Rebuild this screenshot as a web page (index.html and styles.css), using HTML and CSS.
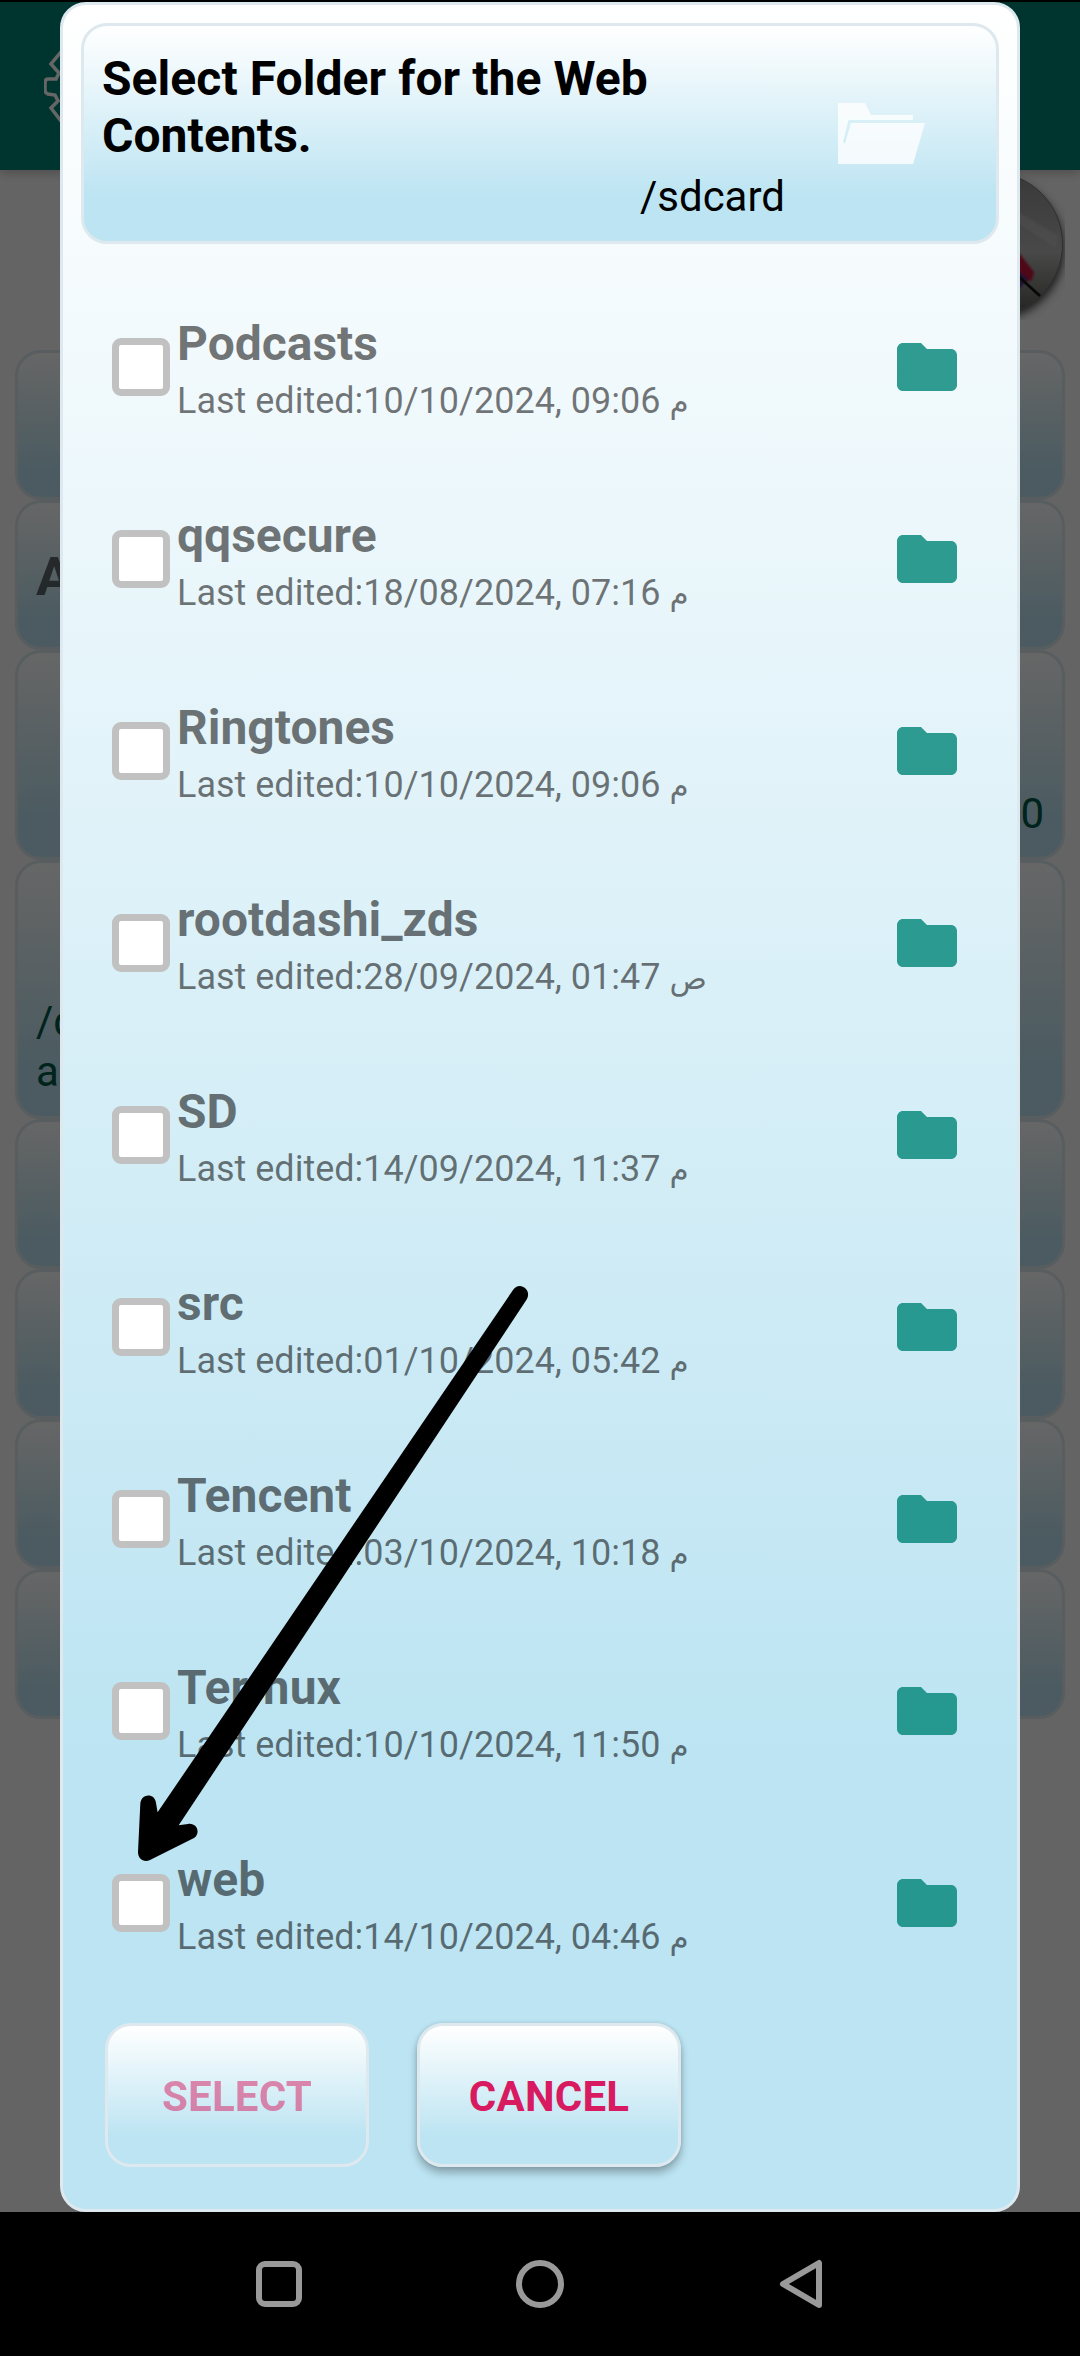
FILE: index.html
```html
<!DOCTYPE html>
<html lang="en">
<head>
<meta charset="utf-8">
<title>Select Folder</title>
<link rel="stylesheet" href="styles.css">
</head>
<body>
<svg class="defs" aria-hidden="true">
  <symbol id="folder" viewBox="0 0 24 24"><path d="M10 4H4c-1.100 0-2 .9-2 2v12c0 1.100.9 2 2 2h16c1.100 0 2-.9 2-2V8c0-1.100-.9-2-2-2h-8z"/></symbol>
</svg>
<div class="screen">
  <div class="app">
    <header class="toolbar">
      <svg class="gear" viewBox="0 0 84 84"><path d="M34 2h16l2 10 6 3 9-7 10 11-7 9 3 5 10 2v14l-10 3-3 6 7 8-10 11-9-7-6 3-2 10H34l-2-10-6-3-9 7L7 64l7-7-3-6-7-1q-3-1-3-4v-7q0-4 3-4h8l3-6-8-9L17 8l9 7 6-3z"/></svg>
    </header>
    <div class="banner">
      <svg class="avatar" viewBox="0 0 153 150">
        <defs>
          <linearGradient id="disc" x1="0" y1="0" x2="0" y2="1"><stop offset="0" stop-color="#8f8f8f"/><stop offset=".55" stop-color="#b4b6b4"/><stop offset=".8" stop-color="#83857e"/><stop offset="1" stop-color="#555"/></linearGradient>
          <filter id="soft" x="-20%" y="-20%" width="140%" height="140%"><feGaussianBlur stdDeviation="5"/></filter>
          <filter id="slight" x="-20%" y="-20%" width="140%" height="140%"><feGaussianBlur stdDeviation="1.200"/></filter>
        </defs>
        <circle cx="81" cy="79" r="71" fill="#444" filter="url(#soft)"/>
        <circle cx="79" cy="74" r="71.500" fill="url(#disc)" stroke="#777" stroke-width="1"/>
        <path d="M106 42l40 24-2 12-40-26z" fill="#d0d0d0" opacity=".4" filter="url(#slight)"/>
        <path d="M100 74l22 28-2 8-7 2-13-14z" fill="#c2143e" filter="url(#slight)"/>
        <path d="M100 96l16 13-8 9-8 4z" fill="#4b2f86" filter="url(#slight)"/>
        <path d="M106 106l22 20" stroke="#171717" stroke-width="3"/>
      </svg>
    </div>
    <main class="cards">
      <section class="card"></section>
      <section class="card card-title">A</section>
      <section class="card card-value">0</section>
      <section class="card card-path">/d<br>a</section>
      <section class="card"></section>
      <section class="card"></section>
      <section class="card"></section>
      <section class="card"></section>
    </main>
  </div>

  <div class="scrim">
    <div class="dialog" role="dialog">
      <header class="dialog-head">
        <div class="head-text">
          <h1>Select Folder for the Web Contents.</h1>
          <p>/sdcard</p>
        </div>
        <svg class="open-folder" viewBox="0 0 87 61"><path d="M0 0h27l6 12h42v5H10.500L5 39l2 1.500L13 20h74L75 61H0z"/></svg>
      </header>

      <ul class="list">
        <li class="row"><span class="check"></span><div class="info"><b>Podcasts</b><span>Last edited:10/10/2024, 09:06 <i>م</i></span></div><svg class="folder"><use href="#folder"/></svg></li>
        <li class="row"><span class="check"></span><div class="info"><b>qqsecure</b><span>Last edited:18/08/2024, 07:16 <i>م</i></span></div><svg class="folder"><use href="#folder"/></svg></li>
        <li class="row"><span class="check"></span><div class="info"><b>Ringtones</b><span>Last edited:10/10/2024, 09:06 <i>م</i></span></div><svg class="folder"><use href="#folder"/></svg></li>
        <li class="row"><span class="check"></span><div class="info"><b>rootdashi_zds</b><span>Last edited:28/09/2024, 01:47 <i>ص</i></span></div><svg class="folder"><use href="#folder"/></svg></li>
        <li class="row"><span class="check"></span><div class="info"><b>SD</b><span>Last edited:14/09/2024, 11:37 <i>م</i></span></div><svg class="folder"><use href="#folder"/></svg></li>
        <li class="row"><span class="check"></span><div class="info"><b>src</b><span>Last edited:01/10/2024, 05:42 <i>م</i></span></div><svg class="folder"><use href="#folder"/></svg></li>
        <li class="row"><span class="check"></span><div class="info"><b>Tencent</b><span>Last edited:03/10/2024, 10:18 <i>م</i></span></div><svg class="folder"><use href="#folder"/></svg></li>
        <li class="row"><span class="check"></span><div class="info"><b>Termux</b><span>Last edited:10/10/2024, 11:50 <i>م</i></span></div><svg class="folder"><use href="#folder"/></svg></li>
        <li class="row"><span class="check"></span><div class="info"><b>web</b><span>Last edited:14/10/2024, 04:46 <i>م</i></span></div><svg class="folder"><use href="#folder"/></svg></li>
      </ul>

      <footer class="actions">
        <button class="btn btn-off" disabled><span>SELECT</span></button>
        <button class="btn btn-on"><span>CANCEL</span></button>
      </footer>
    </div>
  </div>

  <nav class="navbar">
    <svg viewBox="0 0 60 60"><rect x="10" y="10" width="40" height="40" rx="6"/></svg>
    <svg viewBox="0 0 60 60"><circle cx="30" cy="30" r="21"/></svg>
    <svg viewBox="0 0 60 60"><path d="M12 30L48 9V51z"/></svg>
  </nav>

  <svg class="arrow" viewBox="130 1280 410 590"><path d="M513 1290C519 1281 532 1289 527 1299L178.700 1825.300 188 1823.900C197 1822.500 201 1833 194 1838L150 1860C144 1863 138 1859 138 1852L140.300 1804C141 1793 155 1793 156 1803L157.600 1812.300Z"/></svg>
</div>
</body>
</html>
```
FILE: styles.css
```css
* {
  box-sizing: border-box;
}

body {
  margin: 0;
  background: #000;
  font-family: Roboto, "DejaVu Sans", sans-serif;
}

h1, p, ul {
  margin: 0;
  padding: 0;
  list-style: none;
}

.defs {
  position: absolute;
  width: 0;
  height: 0;
}

.screen {
  position: relative;
  width: 1080px;
  height: 2356px;
  overflow: hidden;
  padding-top: 2px;
  background: #000;
}

/* Settings page behind the dialog */
.app {
  height: 2210px;
  background: #fafafa;
}

.toolbar {
  height: 168px;
  padding: 42px 44px;
  background: #008577;
  box-shadow: 0 3px 10px rgba(0, 0, 0, .22);
}

.gear {
  display: block;
  width: 84px;
  height: 84px;
  fill: none;
  stroke: #fff;
  stroke-width: 3.5;
}

.banner {
  display: flex;
  justify-content: flex-end;
  height: 180px;
  padding-right: 15px;
}

.avatar {
  width: 153px;
  height: 150px;
}

.cards {
  padding: 0 15px;
}

.card {
  height: 150px;
  padding: 0 18px;
  border: 3px solid #dde9ee;
  border-radius: 26px;
  background: linear-gradient(#fff, #bce4f2 80%);
}

.card-title {
  font-size: 54px;
  font-weight: bold;
  line-height: 148px;
  color: rgba(0, 0, 0, .57);
}

.card-value,
.card-path {
  display: flex;
  align-items: flex-end;
  font-size: 42px;
  line-height: 50px;
  color: #005746;
}

.card-value {
  height: 210px;
  justify-content: flex-end;
  padding-bottom: 18px;
}

.card-path {
  height: 259px;
  padding-bottom: 19px;
}

/* Dialog */
.scrim {
  position: absolute;
  top: 2px;
  left: 0;
  width: 1080px;
  height: 2210px;
  padding: 0 60px;
  background: rgba(0, 0, 0, .6);
}

.dialog {
  display: flex;
  flex-direction: column;
  height: 2210px;
  padding: 18px;
  border: 3px solid #dde9ee;
  border-radius: 26px;
  background: linear-gradient(#fff, #bce4f2 80%);
}

.dialog-head {
  display: flex;
  align-items: center;
  height: 221px;
  padding: 0 70px 0 18px;
  border: 3px solid #dde9ee;
  border-radius: 26px;
  background: linear-gradient(#fff, #bce4f2 80%);
}

.head-text {
  flex: none;
  width: 683px;
  padding-top: 5px;
}

.head-text h1 {
  width: 600px;
  font-size: 48px;
  line-height: 57px;
  letter-spacing: .06px;
}

.head-text p {
  margin-top: 8px;
  font-size: 42px;
  line-height: 50px;
  text-align: right;
}

.open-folder {
  width: 87px;
  height: 61px;
  margin-left: 53px;
  fill: #fff;
  opacity: .8;
}

.list {
  padding: 27px 36px 0 31px;
}

.row {
  display: flex;
  align-items: center;
  height: 192px;
}

.check {
  width: 58px;
  height: 58px;
  border: 7px solid #c1c1c1;
  border-radius: 9px;
  background: #fff;
}

.info {
  display: flex;
  flex: 1;
  flex-direction: column;
  padding: 10px 0 0 7px;
  color: rgba(0, 0, 0, .54);
}

.info b {
  font-size: 48px;
  line-height: 57px;
}

.info span {
  font-size: 36px;
  line-height: 58px;
}

.info i {
  font-size: 31px;
  font-style: normal;
  line-height: 1;
}

.folder {
  width: 72px;
  height: 72px;
  fill: #008577;
  opacity: .8;
}

.actions {
  display: flex;
  gap: 48px;
  padding: 24px 24px 0;
}

.btn {
  width: 264px;
  height: 144px;
  padding: 2px 0 0;
  border: 3px solid #dde9ee;
  border-radius: 26px;
  background: linear-gradient(#fff, #bce4f2 80%);
  font: bold 42px Roboto, sans-serif;
  letter-spacing: .2px;
  color: #d81b60;
}

.btn-off span {
  opacity: .5;
}

.btn-on {
  box-shadow: 0 6px 9px rgba(0, 0, 0, .28), 0 0 4px rgba(0, 0, 0, .12);
}

/* System bars and pointer */
.navbar {
  display: flex;
  justify-content: space-between;
  height: 144px;
  padding: 42px 249px 0;
}

.navbar svg {
  width: 60px;
  height: 60px;
  fill: none;
  stroke: #999;
  stroke-width: 6;
  stroke-linejoin: round;
}

.arrow {
  position: absolute;
  top: 1280px;
  left: 130px;
  width: 410px;
  height: 590px;
}
```
